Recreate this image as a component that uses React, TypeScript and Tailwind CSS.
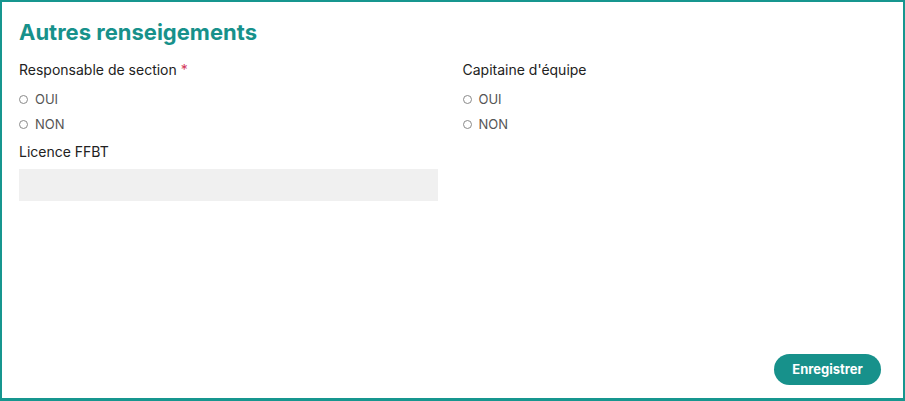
import { useState } from "react";

const FONT = "font-['Inter',_'Noto_Sans',_sans-serif]";

function Radio({ value, checked, onChange }: { value: string; checked: boolean; onChange: (v: string) => void }) {
  return (
    <label className="flex h-[25px] cursor-pointer items-center gap-[7px]" onClick={() => onChange(value)}>
      <span
        className={`flex h-[9px] w-[9px] items-center justify-center rounded-full border ${checked ? "border-[#17918b]" : "border-[#8a8a8a]"}`}
      >
        {checked && <span className="h-[5px] w-[5px] rounded-full bg-[#17918b]" />}
      </span>
      <span className="text-[13px] text-[#555]">{value}</span>
    </label>
  );
}

export default function App() {
  const [responsable, setResponsable] = useState("");
  const [capitaine, setCapitaine] = useState("");

  return (
    <div className={`${FONT} h-[401px] w-[905px] border-x-2 border-t-2 border-b-[3px] border-[#16968f] bg-white`}>
      <div className="flex h-full flex-col px-[17px] pb-[13px] pt-[16px]">
        {/* Title */}
        <h2 className="text-[22px] font-bold leading-[28px] text-[#17918b]">Autres renseigements</h2>

        <div className="mt-[14px] grid grid-cols-2 gap-x-5">
          {/* Left column */}
          <div className="flex flex-col">
            <div className="text-[14px] leading-[20px] text-[#222]">
              Responsable de section <span className="text-[#d33a5b]">*</span>
            </div>
            <div className="mt-[7px] flex flex-col">
              <Radio value="OUI" checked={responsable === "OUI"} onChange={setResponsable} />
              <Radio value="NON" checked={responsable === "NON"} onChange={setResponsable} />
            </div>
            <div className="mt-[5px] text-[14px] leading-[20px] text-[#222]">Licence FFBT</div>
            <input className="mt-[7px] h-[32px] w-[419px] bg-[#f0f0f0] px-3 text-[13px] outline-none" />
          </div>

          {/* Right column */}
          <div className="flex flex-col">
            <div className="text-[14px] leading-[20px] text-[#222]">Capitaine d'équipe</div>
            <div className="mt-[7px] flex flex-col">
              <Radio value="OUI" checked={capitaine === "OUI"} onChange={setCapitaine} />
              <Radio value="NON" checked={capitaine === "NON"} onChange={setCapitaine} />
            </div>
          </div>
        </div>

        <div className="mt-auto flex justify-end pr-[5px]">
          <button className="h-[31px] w-[107px] rounded-full bg-[#17918b] text-[13px] font-bold text-white">Enregistrer</button>
        </div>
      </div>
    </div>
  );
}
